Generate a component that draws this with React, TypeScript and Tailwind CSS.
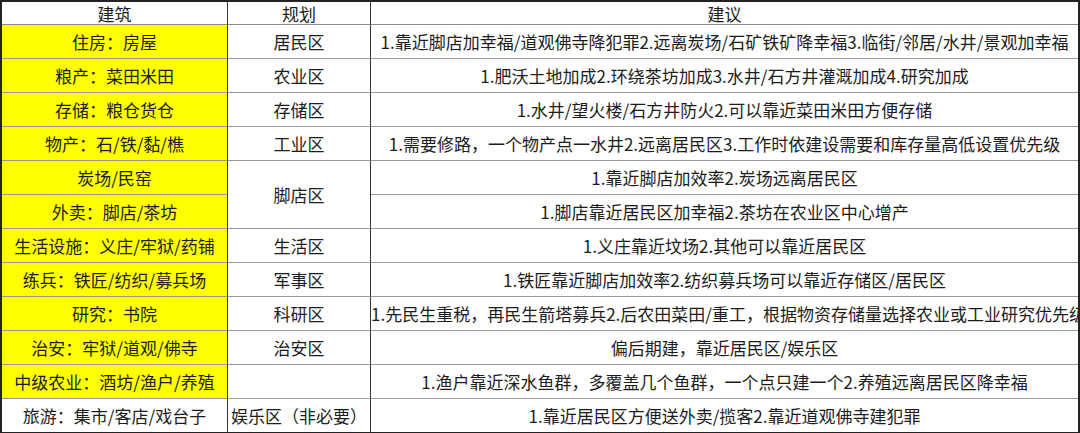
const ROWS: { building: string; zone?: string; span?: boolean; skipZone?: boolean; advice: string; yellow: boolean }[] = [
  { building: "住房：房屋", zone: "居民区", advice: "1.靠近脚店加幸福/道观佛寺降犯罪2.远离炭场/石矿铁矿降幸福3.临街/邻居/水井/景观加幸福", yellow: true },
  { building: "粮产：菜田米田", zone: "农业区", advice: "1.肥沃土地加成2.环绕茶坊加成3.水井/石方井灌溉加成4.研究加成", yellow: true },
  { building: "存储：粮仓货仓", zone: "存储区", advice: "1.水井/望火楼/石方井防火2.可以靠近菜田米田方便存储", yellow: true },
  { building: "物产：石/铁/黏/樵", zone: "工业区", advice: "1.需要修路，一个物产点一水井2.远离居民区3.工作时依建设需要和库存量高低设置优先级", yellow: true },
  { building: "炭场/民窑", zone: "脚店区", span: true, advice: "1.靠近脚店加效率2.炭场远离居民区", yellow: true },
  { building: "外卖：脚店/茶坊", skipZone: true, advice: "1.脚店靠近居民区加幸福2.茶坊在农业区中心增产", yellow: true },
  { building: "生活设施：义庄/牢狱/药铺", zone: "生活区", advice: "1.义庄靠近坟场2.其他可以靠近居民区", yellow: true },
  { building: "练兵：铁匠/纺织/募兵场", zone: "军事区", advice: "1.铁匠靠近脚店加效率2.纺织募兵场可以靠近存储区/居民区", yellow: true },
  { building: "研究：书院", zone: "科研区", advice: "1.先民生重税，再民生箭塔募兵2.后农田菜田/重工，根据物资存储量选择农业或工业研究优先级", yellow: true },
  { building: "治安：牢狱/道观/佛寺", zone: "治安区", advice: "偏后期建，靠近居民区/娱乐区", yellow: true },
  { building: "中级农业：酒坊/渔户/养殖", zone: "", advice: "1.渔户靠近深水鱼群，多覆盖几个鱼群，一个点只建一个2.养殖远离居民区降幸福", yellow: true },
  { building: "旅游：集市/客店/戏台子", zone: "娱乐区（非必要）", advice: "1.靠近居民区方便送外卖/揽客2.靠近道观佛寺建犯罪", yellow: false },
];

const cell = "overflow-hidden whitespace-nowrap text-center border-b border-[#9a9a9a]";
const head = "flex items-center justify-center whitespace-nowrap border-b border-[#8a8a8a] leading-none";

export default function App() {
  return (
    <div
      className="w-[1080px] h-[433px] bg-white text-[#1c1c1c] text-[17px] border-x-2 border-t-2 border-[#222]"
      style={{ fontFamily: '"Noto Sans CJK SC", "Liberation Sans", sans-serif' }}
    >
      <div className="grid grid-cols-[226px_143px_1fr] grid-rows-[23px_repeat(12,34px)]">
        {/* header */}
        <div className={`${head} border-r border-r-[#333]`}>建筑</div>
        <div className={`${head} border-r border-r-[#333]`}>规划</div>
        <div className={head}>建议</div>

        {ROWS.map((r, i) => {
          const last = i === ROWS.length - 1;
          const bottom = last ? "border-b-[#222]" : "";
          return [
            <div
              key={`b${i}`}
              className={`${cell} ${bottom} leading-[33px] border-r border-r-[#333] ${r.yellow ? "bg-[#ffff00]" : "bg-white"}`}
            >
              {r.building}
            </div>,
            r.skipZone ? null : (
              <div
                key={`z${i}`}
                className={`${cell} ${bottom} border-r border-r-[#333] ${r.span ? "row-span-2 flex items-center justify-center" : "leading-[33px]"}`}
              >
                {r.zone}
              </div>
            ),
            <div key={`a${i}`} className={`${cell} ${bottom} leading-[33px]`}>
              {r.advice}
            </div>,
          ];
        })}
      </div>
    </div>
  );
}
